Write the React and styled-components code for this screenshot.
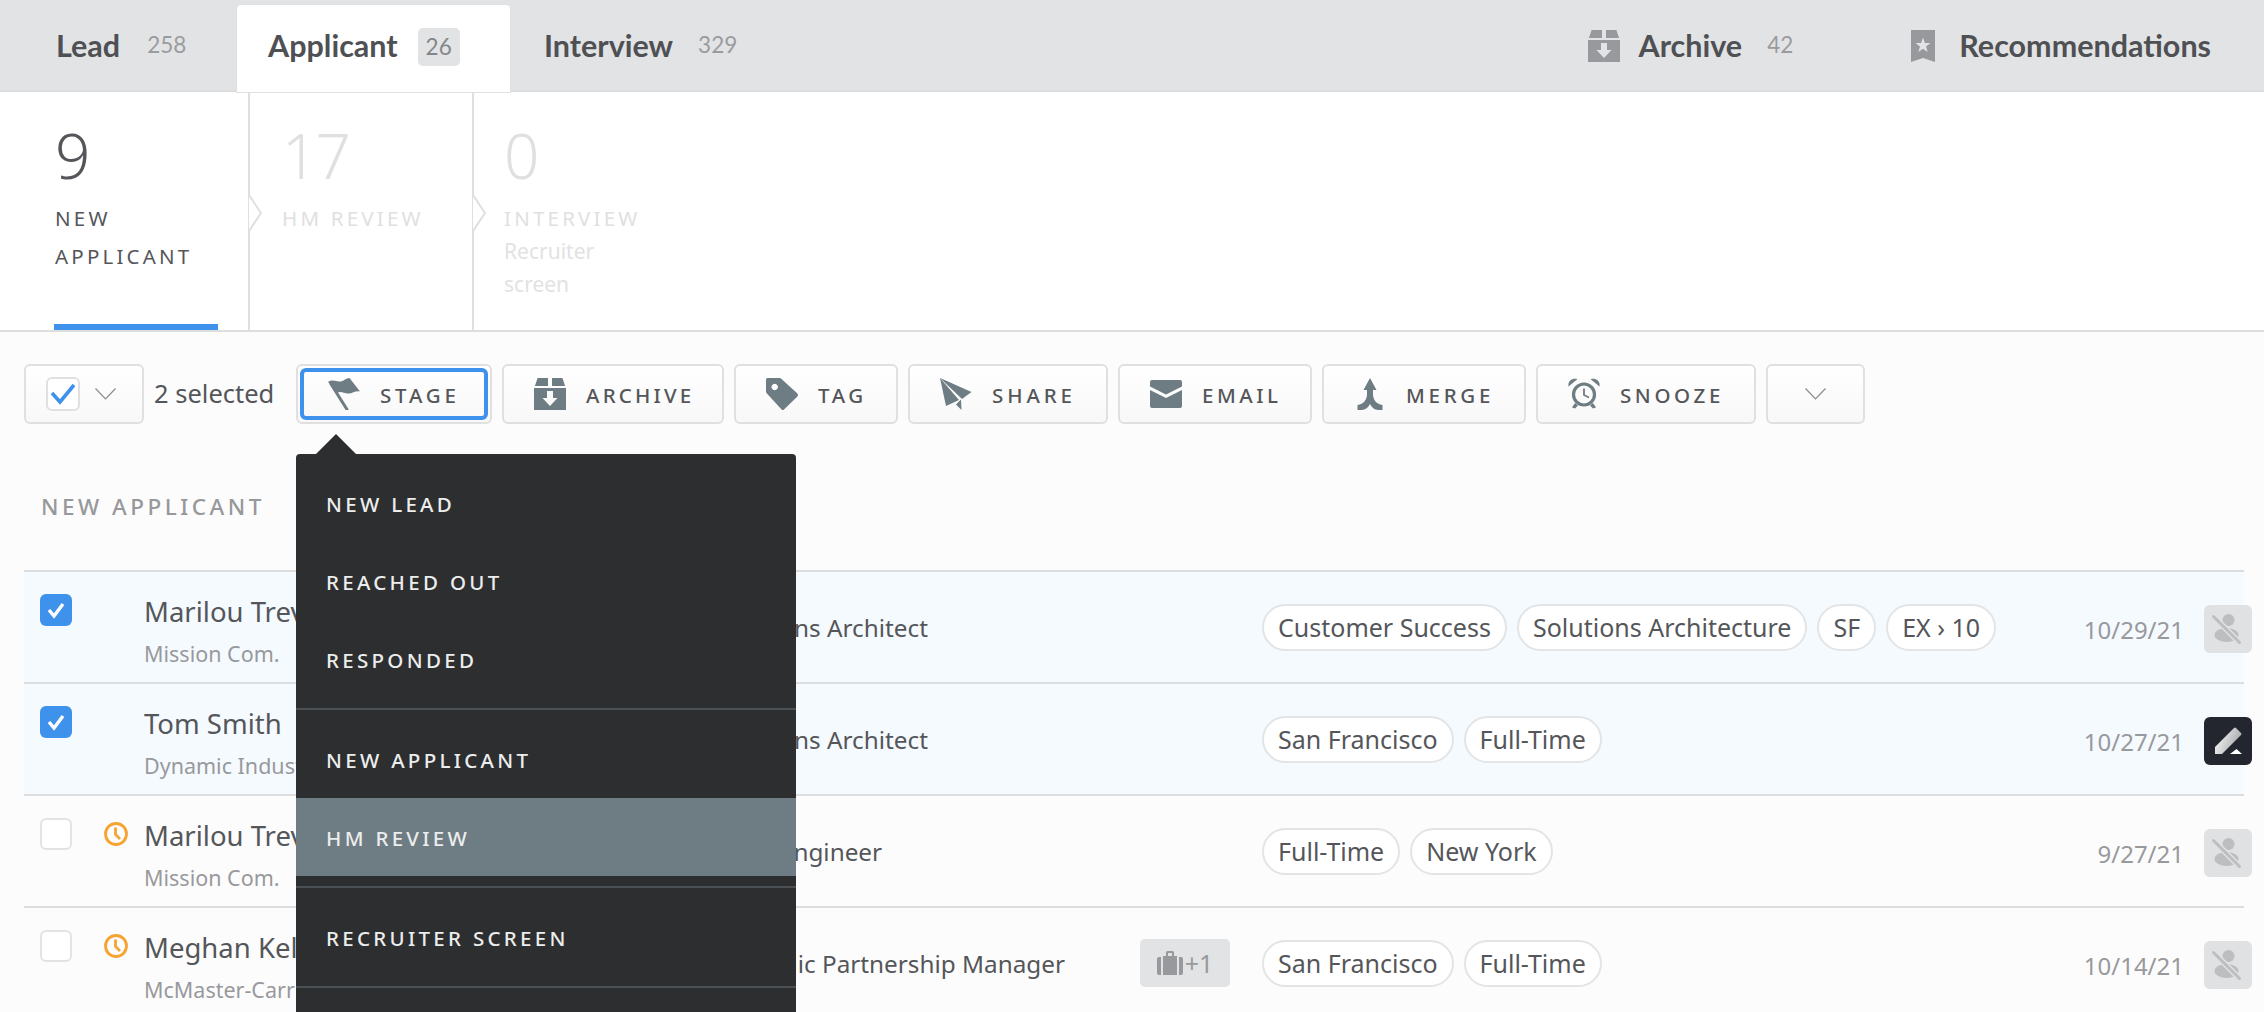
import React from "react";
import styled, { createGlobalStyle } from "styled-components";

const Global = createGlobalStyle`
  html, body { margin: 0; padding: 0; height: 100%; overflow: hidden; background: #fcfcfc; }
  body { font-family: "Lato", "Noto Sans", sans-serif; color: #54565a; }
  #root { height: 100vh; overflow: hidden; }
  * { box-sizing: border-box; }
`;

const SANS = `"Noto Sans", "Open Sans", sans-serif`;

const Header = styled.header`
  display: flex; height: 92px; background: #e2e3e5; border-bottom: 2px solid #dcddde; padding-right: 53px;
`;
const Tab = styled.div`
  display: flex; align-items: center; height: ${p => (p.$active ? "87px" : "90px")};
  width: ${p => p.$w}px; padding-left: ${p => p.$pad}px;
  margin-top: ${p => (p.$active ? "5px" : "0")};
  background: ${p => (p.$active ? "#fff" : "transparent")};
  border-radius: ${p => (p.$active ? "4px 4px 0 0" : "0")};
  box-shadow: ${p => (p.$active ? "0 0 0 1px #dfe0e2" : "none")};
  padding-top: ${p => (p.$active ? "0" : "1px")};
  padding-bottom: ${p => (p.$active ? "6px" : "0")};
`;
const TabName = styled.span`
  font: 700 30.5px/1 "Lato", sans-serif; color: #4f5054; letter-spacing: 0;
`;
const TabCount = styled.span`
  font: 400 22.5px/1 "Lato", sans-serif; color: #9a9b9e; margin-left: ${p => p.$gap}px;
`;
const TabBadge = styled.span`
  display: flex; align-items: center; justify-content: center; width: 42px; height: 38px;
  margin-left: 20px; background: #e2e3e5; border-radius: 5px; margin-top: 3px;
  font: 400 22.5px/1 "Lato", sans-serif; color: #85868a;
`;
const RightTabs = styled.div`
  display: flex; align-items: center; margin-left: auto; padding-top: 1px;
`;
const ArchiveLink = styled.div`
  display: flex; align-items: center; margin-right: 118px;
`;
const RecLink = styled.div`
  display: flex; align-items: center;
`;
const HeaderIcon = styled.svg`
  width: ${p => p.$w}px; height: 32px; margin-right: ${p => p.$gap}px; fill: #98999c; display: block;
`;

const Stages = styled.section`
  display: flex; height: 240px; background: #fff; border-bottom: 2px solid #dddedf;
`;
const Stage = styled.div`
  position: relative; width: ${p => p.$w}px; padding-left: ${p => p.$pad}px; padding-top: 28px;
  border-right: ${p => (p.$last ? "none" : "2px solid #dedfe0")};
  color: ${p => (p.$active ? "#54565a" : "#e0e0e0")};
`;
const StageCount = styled.div`
  font: 300 62px/70px "Noto Sans", sans-serif; letter-spacing: -2px; color: inherit;
`;
const StageLabel = styled.div`
  font: 400 20.5px/38px ${SANS}; letter-spacing: 3.2px; margin-top: 9px;
  width: ${p => p.$w}px; color: inherit;
`;
const StageNote = styled.div`
  font: 400 21px/33px ${SANS}; width: 100px; margin-top: -2px; color: #e2e2e2;
`;
const ActiveBar = styled.div`
  position: absolute; left: 54px; bottom: 0; width: 164px; height: 6px; background: #3f92ec;
`;
const Chevron = styled.svg`
  position: absolute; right: -15px; top: 103px; width: 14px; height: 36px; background: #fff;
`;

const Toolbar = styled.div`
  display: flex; align-items: center; gap: 10px; padding: 32px 0 0 24px; height: 92px;
`;
const ButtonWrap = styled.div`
  position: relative;
`;
const Button = styled.div`
  position: relative; display: flex; align-items: center; height: 60px; width: ${p => p.$w}px;
  padding-left: 30px; border: 2px solid #e0e0e0; border-radius: 6px;
  background: linear-gradient(#fff, #f8f8f8);
  ${p => p.$focus && `&::after { content: ""; position: absolute; inset: 2px; border: 4px solid #3f92ec; border-radius: 6px; }`}
`;
const ButtonIcon = styled.svg`
  width: 32px; height: 32px; flex: none; margin-right: 20px; fill: #6e7c83;
`;
const ButtonLabel = styled.span`
  font: 500 20.5px/1 ${SANS}; letter-spacing: ${p => p.$ls}px; color: #54565a; margin-top: 3px;
`;
const SelectAll = styled.div`
  display: flex; align-items: center; width: 120px; height: 60px; padding-left: 20px;
  border: 2px solid #e0e0e0; border-radius: 6px; background: linear-gradient(#fff, #f8f8f8);
`;
const Check = styled.div`
  display: flex; align-items: center; justify-content: center; width: 34px; height: 34px;
  border: 2px solid #e0e0e0; border-radius: 6px; background: #fff; margin-right: 15px;
`;
const Caret = styled.svg`
  width: 21px; height: 12px; fill: none; stroke: #8a8b8e; stroke-width: 1.2; flex: none;
`;
const MoreButton = styled.div`
  display: flex; align-items: center; justify-content: center; width: 99px; height: 60px;
  border: 2px solid #e0e0e0; border-radius: 6px; background: linear-gradient(#fff, #f8f8f8);
`;
const SelectedCount = styled.span`
  font: 400 25.5px/1 ${SANS}; color: #54565a; width: 132px; white-space: nowrap;
`;

const Menu = styled.div`
  position: absolute; left: 0; top: 90px; width: 500px; height: 558px; background: #2d2e30;
  border-radius: 4px 4px 0 0; z-index: 10;
  &::before {
    content: ""; position: absolute; left: 20px; top: -20px;
    border-left: 20px solid transparent; border-right: 20px solid transparent; border-bottom: 20px solid #2d2e30;
  }
`;
const MenuGroup = styled.div`
  padding: ${p => (p.$first ? "12px 0 8px" : "10px 0")};
  border-top: ${p => (p.$first ? "none" : "2px solid #4a5054")};
`;
const MenuItem = styled.div`
  height: 78px; display: flex; align-items: center; padding: ${p => (p.$nudge ? "2px 0 0 30px" : "0 0 2px 30px")};
  font: 500 20.5px/1 ${SANS}; letter-spacing: 3.3px; color: #eceded;
  background: ${p => (p.$hl ? "#6e7c83" : "transparent")};
`;

const SectionTitle = styled.h2`
  margin: 63px 0 29px; padding: 0 0 0 41px; height: 54px;
  font: 500 22.5px/40px ${SANS}; letter-spacing: 3.5px; color: #97989b;
`;

const List = styled.div`
  margin: 0 20px 0 24px;
`;
const Row = styled.div`
  display: grid; grid-template-columns: 80px 41px 570px 547px 1fr auto 60px; align-items: center;
  height: 112px; border-top: 2px solid #dcdddf; background: ${p => (p.$sel ? "#f5faff" : "transparent")};
`;
const BoxCell = styled.div`
  align-self: start; padding: 22px 0 0 16px;
`;
const RowBox = styled.div`
  display: flex; align-items: center; justify-content: center; width: 32px; height: 32px; border-radius: 6px;
  background: ${p => (p.$on ? "#3f92ec" : "#fff")}; border: ${p => (p.$on ? "none" : "2px solid #e3e3e3")};
`;
const ClockCell = styled.div`
  align-self: start; padding-top: 26px;
`;
const Clock = styled.svg`
  width: 24px; height: 24px; display: block; fill: none; stroke: #f5a431; stroke-width: 2.8;
`;
const Person = styled.div`
  align-self: start; padding-top: 21px; margin-left: -1px;
`;
const Name = styled.div`
  font: 400 27.5px/38px ${SANS}; color: #54565a; white-space: nowrap;
`;
const Company = styled.div`
  font: 400 21.5px/30px ${SANS}; color: #98999c; margin-top: 8px; white-space: nowrap;
`;
const JobCell = styled.div`
  display: flex; align-items: center; justify-content: space-between; padding-right: 32px;
`;
const JobTitle = styled.span`
  font: 400 24.3px/1 ${SANS}; color: #54565a; white-space: nowrap; margin-top: 2px;
`;
const JobChip = styled.span`
  display: flex; align-items: center; gap: 2px; width: 90px; height: 48px; justify-content: center; border-radius: 5px;
  background: #e2e3e5; font: 400 25px/1 ${SANS}; color: #98999c;
`;
const Pills = styled.div`
  display: flex; gap: 10px;
`;
const Pill = styled.span`
  display: flex; align-items: center; height: 47px; padding: 0 14px; border-radius: 24px;
  border: 2px solid #e3e4e5; background: #fff; font: 400 25px/1 ${SANS}; color: #54565a; white-space: nowrap;
`;
const DateText = styled.div`
  text-align: right; padding-top: 6px; font: 400 24px/1 ${SANS}; color: #98999c;
`;
const Action = styled.div`
  display: flex; align-items: center; justify-content: center; width: 48px; height: 48px; border-radius: 6px;
  justify-self: end; margin-right: -8px; margin-top: 4px;
  background: ${p => (p.$dark ? "#24262f" : "#e0e1e2")};
`;

const box = "M3.6 0H14V8H.9z M18 0H28.4L31.1 8H18z M0 10H32V32H0z M13 13h6v7h4.5L16 28 8.5 20H13z";

const Icons = {
  stage: <g><path d="M0 4C4 1 8 3 11 3.5 15 4 18 0 21.5 0L32 13.5C27 12.5 24 16 20 15.5 16 15 13 13 9.5 14.5z" /><path d="M3 6 19 31.5" stroke="#6e7c83" strokeWidth="3" strokeLinecap="round" /></g>,
  archive: <path fillRule="evenodd" d={box} />,
  tag: <path fillRule="evenodd" d="M1.5 0H13.5Q14.7 0 15.5 1L31.4 15.6Q32.5 17 31.4 18.4L18 31.4Q16.7 32.5 15.6 31.4L.9 15.5Q0 14.5 0 13.5V1.5Q0 0 1.5 0zM8.7 5.8a3.2 3.2 0 1 0 .01 0z" />,
  share: <g><path d="M0 0 31.5 14 22 21z" /><path d="M0 0 19 22 6 28z" /><path d="M16 26.5 21 21.5 21.5 32z" /></g>,
  email: <path fillRule="evenodd" d="M2 0H30Q32 0 32 2V26Q32 28 30 28H2Q0 28 0 26V2Q0 0 2 0zM0 6.5V10L16 18 32 10V6.5L16 14.5z" transform="translate(0 2)" />,
  merge: <path d="M16 0 22.5 12H19V16C19 22 22.5 26 28.5 27V32H24.5C20.5 32 17.5 29 16 26 14.5 29 11.5 32 7.5 32H3.5V27C9.5 26 13 22 13 16V12H9.5Z" />,
  snooze: <g><circle cx="16" cy="16.5" r="10.5" fill="none" stroke="#6e7c83" strokeWidth="3.2" /><path d="M16 10.5V17L21 19.5" fill="none" stroke="#6e7c83" strokeWidth="1.8" /><path d="M.5 8.5C-.5 3 4 -.5 9.5 1z" /><path d="M31.5 8.5C32.5 3 28 -.5 22.5 1z" /><path d="M7 25 4 29.5 7 30.5 10 27.5z" /><path d="M25 25 28 29.5 25 30.5 22 27.5z" /></g>,
};

const actions = [
  ["stage", "STAGE", 196, 3.8],
  ["archive", "ARCHIVE", 222, 3.2],
  ["tag", "TAG", 164, 3.6],
  ["share", "SHARE", 200, 3.9],
  ["email", "EMAIL", 194, 3.5],
  ["merge", "MERGE", 204, 3.7],
  ["snooze", "SNOOZE", 220, 3.6],
];

const menu = [
  ["NEW LEAD", "REACHED OUT", "RESPONDED"],
  ["NEW APPLICANT", "HM REVIEW"],
  ["RECRUITER SCREEN"],
  [],
];

const rows = [
  { sel: true, name: "Marilou Trevino", co: "Mission Com.", job: "Solutions Architect", tags: ["Customer Success", "Solutions Architecture", "SF", "EX › 10"], date: "10/29/21" },
  { sel: true, name: "Tom Smith", co: "Dynamic Industries", job: "Solutions Architect", tags: ["San Francisco", "Full-Time"], date: "10/27/21", dark: true },
  { clock: true, name: "Marilou Trevino", co: "Mission Com.", job: "Sales Engineer", tags: ["Full-Time", "New York"], date: "9/27/21" },
  { clock: true, name: "Meghan Kelly", co: "McMaster-Carr", job: "Strategic Partnership Manager", chip: true, tags: ["San Francisco", "Full-Time"], date: "10/14/21" },
];

const ChevronDown = () => (
  <Caret viewBox="0 0 21 12"><path d="M.5 .5 10.5 11 20.5 .5" /></Caret>
);

const RowAction = ({ dark }) => (
  <Action $dark={dark}>
    {dark ? (
      <svg width="48" height="48" viewBox="0 0 48 48">
        <defs>
          <linearGradient id="penFill" x1="0" y1="0" x2="1" y2="0.4">
            <stop offset="0" stopColor="#fff" />
            <stop offset="1" stopColor="#a9abad" />
          </linearGradient>
        </defs>
        <path d="M11 30 30 11Q31 10 32 11L37 16Q38 17 37 18L18 37H11z" fill="url(#penFill)" />
        <path d="M26 37 32.5 32 38 37z" fill="#fff" />
      </svg>
    ) : (
      <svg width="48" height="48" viewBox="0 0 48 48">
        <circle cx="24.5" cy="15" r="6" fill="#bdbebf" />
        <ellipse cx="22.5" cy="30" rx="12" ry="7" fill="#bdbebf" />
        <path d="M9 11 36 38" stroke="#e0e1e2" strokeWidth="6" />
        <path d="M9.5 11.5 35.5 37.5" stroke="#bdbebf" strokeWidth="3" strokeLinecap="round" />
      </svg>
    )}
  </Action>
);

export default function App() {
  return (
    <>
      <Global />
      <Header>
        <Tab $w={237} $pad={56}>
          <TabName>Lead</TabName>
          <TabCount $gap={27}>258</TabCount>
        </Tab>
        <Tab $active $w={273} $pad={31}>
          <TabName>Applicant</TabName>
          <TabBadge>26</TabBadge>
        </Tab>
        <Tab $w={260} $pad={34}>
          <TabName>Interview</TabName>
          <TabCount $gap={25}>329</TabCount>
        </Tab>
        <RightTabs>
          <ArchiveLink>
            <HeaderIcon $w={32} $gap={19} viewBox="0 0 32 32"><path fillRule="evenodd" d={box} /></HeaderIcon>
            <TabName>Archive</TabName>
            <TabCount $gap={25}>42</TabCount>
          </ArchiveLink>
          <RecLink>
            <HeaderIcon $w={24} $gap={24} viewBox="0 0 24 32">
              <path fillRule="evenodd" d="M0 0H24V32L12 28 0 32zM12 7.5 13.9 13H19.5L15 16.5 16.7 22 12 18.7 7.3 22 9 16.5 4.5 13H10.1z" />
            </HeaderIcon>
            <TabName>Recommendations</TabName>
          </RecLink>
        </RightTabs>
      </Header>

      <Stages>
        <Stage $active $w={250} $pad={55}>
          <StageCount>9</StageCount>
          <StageLabel $w={150}>NEW APPLICANT</StageLabel>
          <ActiveBar />
          <Chevron viewBox="0 0 14 36" fill="none" stroke="#dedfe0" strokeWidth="2"><path d="M0 0 12 18 0 36" /></Chevron>
        </Stage>
        <Stage $w={224} $pad={32}>
          <StageCount>17</StageCount>
          <StageLabel $w={185}>HM REVIEW</StageLabel>
          <Chevron viewBox="0 0 14 36" fill="none" stroke="#dedfe0" strokeWidth="2"><path d="M0 0 12 18 0 36" /></Chevron>
        </Stage>
        <Stage $last $w={300} $pad={30}>
          <StageCount>0</StageCount>
          <StageLabel $w={185}>INTERVIEW</StageLabel>
          <StageNote>Recruiter screen</StageNote>
        </Stage>
      </Stages>

      <Toolbar>
        <SelectAll>
          <Check>
            <svg width="26" height="22" viewBox="0 0 26 22" fill="none"><path d="M2 10 10 19 24 2" stroke="#3f92ec" strokeWidth="3.6" /></svg>
          </Check>
          <ChevronDown />
        </SelectAll>
        <SelectedCount>2 selected</SelectedCount>
        {actions.map(([id, label, w, ls], i) => (
          <ButtonWrap key={id}>
            <Button $w={w} $focus={i === 0}>
              <ButtonIcon viewBox="0 0 32 32">{Icons[id]}</ButtonIcon>
              <ButtonLabel $ls={ls}>{label}</ButtonLabel>
            </Button>
            {i === 0 && (
              <Menu>
                {menu.map((group, g) => (
                  <MenuGroup key={g} $first={g === 0}>
                    {group.map(item => (
                      <MenuItem key={item} $nudge={g > 0} $hl={item === "HM REVIEW"}>{item}</MenuItem>
                    ))}
                  </MenuGroup>
                ))}
              </Menu>
            )}
          </ButtonWrap>
        ))}
        <MoreButton><ChevronDown /></MoreButton>
      </Toolbar>

      <SectionTitle>NEW APPLICANT</SectionTitle>

      <List>
        {rows.map((r, i) => (
          <Row key={i} $sel={r.sel}>
            <BoxCell>
              <RowBox $on={r.sel}>
                {r.sel && <svg width="20" height="18" viewBox="0 0 20 18" fill="none"><path d="M3 9 8 15 17 3" stroke="#fff" strokeWidth="3.4" /></svg>}
              </RowBox>
            </BoxCell>
            <ClockCell>
              {r.clock && (
                <Clock viewBox="0 0 24 24"><circle cx="12" cy="12" r="10.5" /><path d="M11.5 5.5V12.5L16 17" /></Clock>
              )}
            </ClockCell>
            <Person>
              <Name>{r.name}</Name>
              <Company>{r.co}</Company>
            </Person>
            <JobCell>
              <JobTitle>{r.job}</JobTitle>
              {r.chip && (
                <JobChip>
                  <svg width="26" height="26" viewBox="0 0 26 26" fill="#98999c">
                    <path d="M9 6V2.5Q9 1 10.5 1H15.5Q17 1 17 2.5V6H15V3H11V6zM6 6H20V25H6zM2 7H4V25H2Q0 25 0 23V9Q0 7 2 7zM22 7H24Q26 7 26 9V23Q26 25 24 25H22z" />
                  </svg>
                  +1
                </JobChip>
              )}
            </JobCell>
            <Pills>
              {r.tags.map(t => <Pill key={t}>{t}</Pill>)}
            </Pills>
            <DateText>{r.date}</DateText>
            <RowAction dark={r.dark} />
          </Row>
        ))}
      </List>
    </>
  );
}
